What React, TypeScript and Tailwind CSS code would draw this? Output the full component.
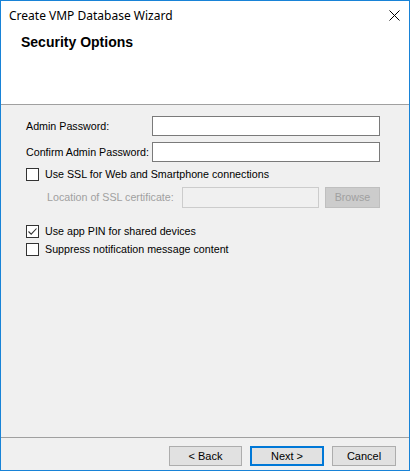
import React, { useState } from "react";

const ui = { fontFamily: '"Liberation Sans", Arial, sans-serif' };

function CheckBox({ checked, onChange }: { checked: boolean; onChange: () => void }) {
  return (
    <button
      type="button"
      onClick={onChange}
      className="w-[13px] h-[13px] border border-[#333333] bg-white flex items-center justify-center shrink-0"
    >
      {checked && (
        <svg width="11" height="11" viewBox="0 0 11 11">
          <path d="M1.5 5.5 L4.2 8.2 L9.5 2.5" fill="none" stroke="#333" strokeWidth="1.1" />
        </svg>
      )}
    </button>
  );
}

function WinButton({ label, focused }: { label: string; focused?: boolean }) {
  return (
    <button
      type="button"
      className={
        "w-full h-[20px] bg-[#e1e1e1] text-[11px] text-black flex items-center justify-center " +
        (focused ? "border-2 border-[#0078d7]" : "border border-[#adadad]")
      }
      style={ui}
    >
      {label}
    </button>
  );
}

export default function App() {
  const [useSsl, setUseSsl] = useState(false);
  const [usePin, setUsePin] = useState(true);
  const [suppress, setSuppress] = useState(false);

  return (
    <div className="w-[410px] h-[471px] border border-[#1883d7] bg-[#f0f0f0] flex flex-col" style={ui}>
      <div className="h-[104px] bg-white border-b border-[#a0a0a0] flex flex-col shrink-0">
        <div className="h-[29px] flex items-center justify-between pl-[8px] pr-[9px]">
          <span className="text-[12px] text-black" style={{ fontFamily: '"Noto Sans", "Open Sans", sans-serif' }}>
            Create VMP Database Wizard
          </span>
          <svg width="11" height="11" viewBox="0 0 11 11">
            <path d="M0.5 0.5 L10.5 10.5 M10.5 0.5 L0.5 10.5" stroke="#000" strokeWidth="1" />
          </svg>
        </div>
        <div className="pl-[20px] pt-[3px] text-[14px] leading-[18px] font-bold text-black">
          Security Options
        </div>
      </div>

      <div className="flex-1 flex flex-col pl-[25px] pr-[29px] pt-[11px] text-[10.7px] text-black whitespace-nowrap">
        <div className="flex items-center h-[20px]">
          <span className="w-[126px] shrink-0">Admin Password:</span>
          <input type="password" className="flex-1 min-w-0 h-[20px] bg-white border border-[#7a7a7a] outline-none" />
        </div>
        <div className="flex items-center h-[20px] mt-[6px]">
          <span className="w-[126px] shrink-0">Confirm Admin Password:</span>
          <input type="password" className="flex-1 min-w-0 h-[20px] bg-white border border-[#7a7a7a] outline-none" />
        </div>
        <div className="flex items-center gap-[6px] h-[13px] mt-[6px]">
          <CheckBox checked={useSsl} onChange={() => setUseSsl(!useSsl)} />
          <span>Use SSL for Web and Smartphone connections</span>
        </div>
        <div className="flex items-center h-[21px] mt-[6px] pl-[21px] text-[#a0a0a0]">
          <span className="w-[135px] shrink-0">Location of SSL certificate:</span>
          <div className="w-[137px] h-[21px] border border-[#cccccc] bg-[#f0f0f0] shrink-0" />
          <div className="ml-[6px] flex-1 h-[21px] border border-[#bfbfbf] bg-[#cccccc] flex items-center justify-center text-[#a0a0a0]">
            Browse
          </div>
        </div>
        <div className="flex items-center gap-[6px] h-[13px] mt-[17px]">
          <CheckBox checked={usePin} onChange={() => setUsePin(!usePin)} />
          <span>Use app PIN for shared devices</span>
        </div>
        <div className="flex items-center gap-[6px] h-[13px] mt-[5px]">
          <CheckBox checked={suppress} onChange={() => setSuppress(!suppress)} />
          <span>Suppress notification message content</span>
        </div>
      </div>

      <div className="h-[33px] border-t border-[#a0a0a0] flex items-start justify-end gap-[8px] pt-[8px] pr-[13px] shrink-0">
        <div className="w-[73px]">
          <WinButton label="< Back" />
        </div>
        <div className="w-[74px]">
          <WinButton label="Next >" focused />
        </div>
        <div className="w-[64px]">
          <WinButton label="Cancel" />
        </div>
      </div>
    </div>
  );
}
